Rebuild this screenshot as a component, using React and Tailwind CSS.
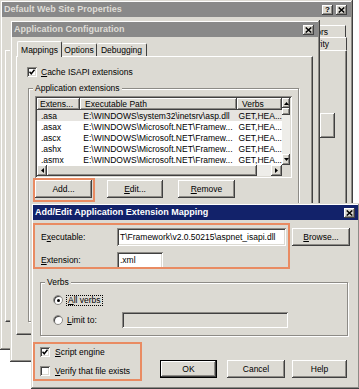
import React from 'react'

const FACE = 'bg-[#dcdad3]'
const RAISED = 'shadow-[inset_-1px_-1px_0_#404040,inset_1px_1px_0_#ffffff,inset_-2px_-2px_0_#8d8b86]'
const SUNKEN = 'shadow-[inset_1px_1px_0_#8d8b86,inset_-1px_-1px_0_#ffffff,inset_2px_2px_0_#404040,inset_-2px_-2px_0_#dcdad3]'
const FRAME = 'shadow-[inset_-1px_-1px_0_#404040,inset_1px_1px_0_#dcdad3,inset_-2px_-2px_0_#8d8b86,inset_2px_2px_0_#ffffff]'
const ETCHED = 'border border-[#8d8b86] shadow-[1px_1px_0_#ffffff,inset_1px_1px_0_#ffffff]'
const PANEL = 'border border-t-white border-l-white border-r-[#404040] border-b-[#404040] shadow-[inset_-1px_-1px_0_#8d8b86]'

const U = ({ children }) => <span className="underline underline-offset-[1px]">{children}</span>

function CloseGlyph() {
    return (
        <svg width="7" height="6" viewBox="0 0 7 6">
            <path d="M0.7 0.5 L6.3 5.5 M6.3 0.5 L0.7 5.5" stroke="#000" strokeWidth="1.5" />
        </svg>
    )
}

function CapButton({ children }) {
    return <div className={`w-[11px] h-[10px] ${FACE} ${RAISED} flex items-center justify-center`}>{children}</div>
}

function TitleBar({ title, active, help, pr }) {
    return (
        <div className={`h-[15px] shrink-0 flex items-center pl-[2px] ${pr} ${active ? 'bg-[#12226a] text-white' : 'bg-[#898989] text-[#dedcd6]'}`}>
            <span className="grow font-bold text-[9px] leading-none whitespace-nowrap">{title}</span>
            <div className="flex gap-[3px]">
                {help && <CapButton><span className="font-bold text-[8px] leading-none text-black">?</span></CapButton>}
                <CapButton><CloseGlyph /></CapButton>
            </div>
        </div>
    )
}

function Tri({ dir }) {
    const vert = dir === 'up' || dir === 'down'
    const pts = { up: '0,3 2.5,0 5,3', down: '0,0 5,0 2.5,3', left: '3,0 3,5 0,2.5', right: '0,0 0,5 3,2.5' }
    return (
        <svg width={vert ? 5 : 3} height={vert ? 3 : 5} viewBox={vert ? '0 0 5 3' : '0 0 3 5'}>
            <polygon points={pts[dir]} fill="#000" />
        </svg>
    )
}

function Arrow({ dir, className }) {
    return <div className={`${FACE} ${RAISED} flex items-center justify-center shrink-0 ${className}`}><Tri dir={dir} /></div>
}

function Check({ on }) {
    return (
        <div className={`w-[10px] h-[10px] bg-white ${SUNKEN} flex items-center justify-center shrink-0`}>
            {on && (
                <svg width="6" height="6" viewBox="0 0 7 7">
                    <path d="M0.6 3.2 L2.6 5.6 L6.4 0.8" fill="none" stroke="#000" strokeWidth="1.7" />
                </svg>
            )}
        </div>
    )
}

function Radio({ on }) {
    return (
        <div className="w-[10px] h-[10px] rounded-full bg-white border border-[#8d8b86] shadow-[inset_1px_1px_0_#404040] flex items-center justify-center shrink-0">
            {on && <div className="w-[3px] h-[3px] rounded-full bg-black" />}
        </div>
    )
}

function Btn({ className, def, children }) {
    return (
        <div className={`h-[18px] ${FACE} ${def ? 'border border-black' : ''} ${RAISED} flex items-center justify-center shrink-0 ${className}`}>
            {children}
        </div>
    )
}

function Group({ label, className, children }) {
    return (
        <div className={`relative ${ETCHED} ${className}`}>
            <span className={`absolute -top-[6px] left-[4px] px-[2px] ${FACE} leading-[10px]`}>{label}</span>
            {children}
        </div>
    )
}

const rows = [
    ['.asa', 'E:\\WINDOWS\\system32\\inetsrv\\asp.dll'],
    ['.asax', 'E:\\WINDOWS\\Microsoft.NET\\Framew...'],
    ['.ascx', 'E:\\WINDOWS\\Microsoft.NET\\Framew...'],
    ['.ashx', 'E:\\WINDOWS\\Microsoft.NET\\Framew...'],
    ['.asmx', 'E:\\WINDOWS\\Microsoft.NET\\Framew...'],
]

function ListView() {
    return (
        <div className={`w-[257px] h-[82px] bg-white ${SUNKEN} p-[2px] flex flex-col`}>
            <div className="flex h-[67px]">
                <div className="w-[245px] flex flex-col">
                    <div className="flex h-[12px]">
                        <div className={`w-[43px] ${FACE} ${RAISED} pl-[3px] flex items-center`}>Extens...</div>
                        <div className={`w-[157px] ${FACE} ${RAISED} pl-[5px] flex items-center`}>Executable Path</div>
                        <div className={`grow ${FACE} ${RAISED} pl-[5px] flex items-center`}>Verbs</div>
                    </div>
                    {rows.map(([ext, path], i) => (
                        <div key={ext} className={`flex h-[11px] items-center whitespace-nowrap ${i === 0 ? 'bg-[#e6e4e0]' : ''}`}>
                            <span className="w-[43px] pl-[4px]">{ext}</span>
                            <span className="w-[157px] pl-[4px] overflow-hidden">{path}</span>
                            <span className="pl-[5px]">GET,HEA...</span>
                        </div>
                    ))}
                </div>
                <div className="w-[8px] flex flex-col bg-[#eeede9]">
                    <Arrow dir="up" className="h-[10px]" />
                    <div className={`h-[7px] ${FACE} ${RAISED}`} />
                    <div className="grow" />
                    <Arrow dir="down" className="h-[11px]" />
                </div>
            </div>
            <div className="flex h-[11px]">
                <div className="w-[245px] flex bg-[#eeede9]">
                    <Arrow dir="left" className="w-[10px]" />
                    <div className={`w-[210px] ${FACE} ${RAISED}`} />
                    <div className="grow" />
                    <Arrow dir="right" className="w-[11px]" />
                </div>
                <div className={`w-[8px] ${FACE}`} />
            </div>
        </div>
    )
}

function PropertiesWindow() {
    return (
        <div className={`absolute left-0 top-0 w-[353px] h-[350px] ${FACE} ${FRAME} p-[2px] flex flex-col`}>
            <TitleBar title="Default Web Site Properties" help pr="pr-[4px]" />
            <div className="pt-[8px] pl-[3px] pr-[4px] flex flex-col">
                <div className="flex justify-end h-[12px] pr-[1px]">
                    <div className={`h-[12px] w-[90px] border-t border-l border-white border-r border-r-[#404040] flex items-center justify-end pr-[17px] whitespace-nowrap`}>Custom Errors</div>
                </div>
                <div className="flex justify-end h-[13px]">
                    <div className={`h-[13px] w-[100px] border-t border-l border-white border-r border-r-[#404040] flex items-center justify-end pr-[17px] whitespace-nowrap`}>Directory Security</div>
                </div>
                <div className={`h-[272px] ${PANEL} flex flex-col`}>
                    <div className={`ml-[314px] mt-[62px] w-[15px] h-[25px] ${FACE} ${RAISED}`} />
                </div>
            </div>
        </div>
    )
}

function ConfigWindow() {
    return (
        <div className={`absolute left-[10px] top-[20px] w-[310px] h-[342px] ${FACE} ${FRAME} p-[2px] flex flex-col`}>
            <TitleBar title="Application Configuration" pr="pr-[4px]" />
            <div className="pt-[4px] pl-[4px] flex flex-col">
                <div className="flex items-end h-[15px] pl-[1px]">
                    <div className={`relative z-10 -mb-[1px] h-[16px] w-[45px] ${FACE} border-t border-l border-white border-r border-r-[#404040] rounded-t-[2px] flex items-center justify-center`}>Mappings</div>
                    <div className={`h-[13px] w-[35px] border-t border-white border-r border-r-[#404040] rounded-t-[2px] flex items-center justify-center`}>Options</div>
                    <div className={`h-[13px] w-[50px] border-t border-white border-r border-r-[#404040] rounded-t-[2px] flex items-center justify-center`}>Debugging</div>
                </div>
                <div className={`w-[297px] h-[279px] ${PANEL} flex flex-col`}>
                    <div className="flex items-center gap-[4px] mt-[10px] ml-[10px] h-[10px]">
                        <Check on />
                        <span><U>C</U>ache ISAPI extensions</span>
                    </div>
                    <Group label="Application extensions" className="mt-[11px] ml-[11px] w-[271px] h-[234px] pt-[7px] pl-[6px]">
                        <ListView />
                        <div className="flex mt-[2px]">
                            <Btn className="w-[57px]">Add...</Btn>
                            <Btn className="w-[56px] ml-[15px]"><span><U>E</U>dit...</span></Btn>
                            <Btn className="w-[57px] ml-[15px]"><span><U>R</U>emove</span></Btn>
                        </div>
                    </Group>
                </div>
            </div>
        </div>
    )
}

function MappingDialog() {
    return (
        <div className={`absolute left-[31px] top-[203px] w-[329px] h-[186px] ${FACE} ${FRAME} p-[2px] flex flex-col`}>
            <TitleBar title="Add/Edit Application Extension Mapping" active pr="pr-[3px]" />
            <div className="pl-[8px] pt-[8px] flex flex-col">
                <div className="flex items-center h-[18px]">
                    <span className="w-[76px]">E<U>x</U>ecutable:</span>
                    <div className={`w-[169px] h-[18px] bg-white ${SUNKEN} flex items-center pl-[3px] overflow-hidden whitespace-nowrap`}>T\Framework\v2.0.50215\aspnet_isapi.dll</div>
                    <Btn className="w-[58px] ml-[6px]"><span><U>B</U>rowse...</span></Btn>
                </div>
                <div className="flex items-center h-[18px] mt-[5px]">
                    <span className="w-[76px]"><U>E</U>xtension:</span>
                    <div className={`w-[46px] h-[17px] bg-white ${SUNKEN} flex items-center pl-[3px]`}>.xml</div>
                </div>
                <Group label="Verbs" className="mt-[13px] -ml-[1px] w-[308px] h-[54px] pt-[12px] pl-[12px]">
                    <div className="flex items-center h-[10px] gap-[3px]">
                        <Radio on />
                        <span className="border border-dotted border-black px-[1px] leading-[9px]"><U>A</U>ll verbs</span>
                    </div>
                    <div className="flex items-center h-[16px] mt-[7px] gap-[4px]">
                        <Radio />
                        <span className="w-[51px]"><U>L</U>imit to:</span>
                        <div className={`w-[166px] h-[16px] ${FACE} ${SUNKEN}`} />
                    </div>
                </Group>
                <div className="flex mt-[11px] -ml-[1px]">
                    <div className="w-[120px] flex flex-col">
                        <div className="flex items-center h-[10px] gap-[5px]">
                            <Check on />
                            <span><U>S</U>cript engine</span>
                        </div>
                        <div className="flex items-center h-[10px] gap-[5px] mt-[9px]">
                            <Check />
                            <span><U>V</U>erify that file exists</span>
                        </div>
                    </div>
                    <div className="flex mt-[13px]">
                        <Btn def className="w-[57px]">OK</Btn>
                        <Btn className="w-[58px] ml-[10px]">Cancel</Btn>
                        <Btn className="w-[55px] ml-[7px]">Help</Btn>
                    </div>
                </div>
            </div>
        </div>
    )
}

export default function App() {
    return (
        <div className="relative w-[359px] h-[389px] overflow-hidden bg-white font-['Liberation_Sans',Arial,sans-serif] text-[8.5px] leading-[10px] text-black">
            <PropertiesWindow />
            <ConfigWindow />
            <MappingDialog />
            {/* annotation outlines */}
            <div className="absolute left-[33px] top-[178px] w-[62px] h-[24px] border-2 border-[#e98b62]" />
            <div className="absolute left-[33px] top-[223px] w-[257px] h-[46px] border-2 border-[#e98b62]" />
            <div className="absolute left-[33px] top-[342px] w-[109px] h-[39px] border-2 border-[#e98b62]" />
        </div>
    )
}
